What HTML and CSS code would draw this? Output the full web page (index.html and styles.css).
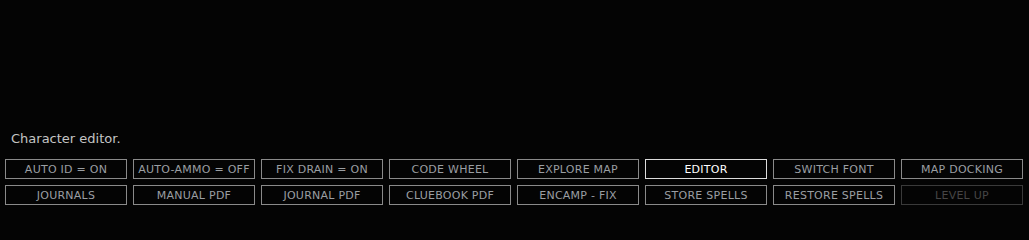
FILE: index.html
```html
<!DOCTYPE html>
<html>
<head>
<meta charset="utf-8">
<link rel="stylesheet" href="styles.css">
</head>
<body>
<div class="screen">
  <div class="status">Character editor.</div>
  <div class="buttons">
    <div class="btn">AUTO ID = ON</div>
    <div class="btn">AUTO-AMMO = OFF</div>
    <div class="btn">FIX DRAIN = ON</div>
    <div class="btn">CODE WHEEL</div>
    <div class="btn">EXPLORE MAP</div>
    <div class="btn active">EDITOR</div>
    <div class="btn">SWITCH FONT</div>
    <div class="btn">MAP DOCKING</div>
    <div class="btn">JOURNALS</div>
    <div class="btn">MANUAL PDF</div>
    <div class="btn">JOURNAL PDF</div>
    <div class="btn">CLUEBOOK PDF</div>
    <div class="btn">ENCAMP - FIX</div>
    <div class="btn">STORE SPELLS</div>
    <div class="btn">RESTORE SPELLS</div>
    <div class="btn disabled">LEVEL UP</div>
  </div>
</div>
</body>
</html>
```

FILE: styles.css
```css
html, body {
  margin: 0;
  padding: 0;
  background: #040404;
}
.screen {
  height: 217px;
  box-sizing: border-box;
  display: flex;
  flex-direction: column;
  justify-content: flex-end;
  padding: 0 0 12px 5px;
  font-family: "DejaVu Sans", Verdana, sans-serif;
}
.status {
  color: #c4c4c4;
  font-size: 13px;
  line-height: 16px;
  padding-left: 6px;
  margin-bottom: 12px;
}
.buttons {
  display: grid;
  grid-template-columns: repeat(8, 122px);
  grid-auto-rows: 20px;
  column-gap: 6px;
  row-gap: 6px;
}
.btn {
  box-sizing: border-box;
  border: 1px solid #8a8a8a;
  color: #9a9ea2;
  font-size: 11px;
  display: flex;
  align-items: center;
  justify-content: center;
  white-space: nowrap;
  letter-spacing: 0.25px;
}
.btn.active {
  border-color: #dcdcdc;
  color: #ffffff;
}
.btn.disabled {
  border-color: #3a3a3a;
  color: #464646;
}
```
